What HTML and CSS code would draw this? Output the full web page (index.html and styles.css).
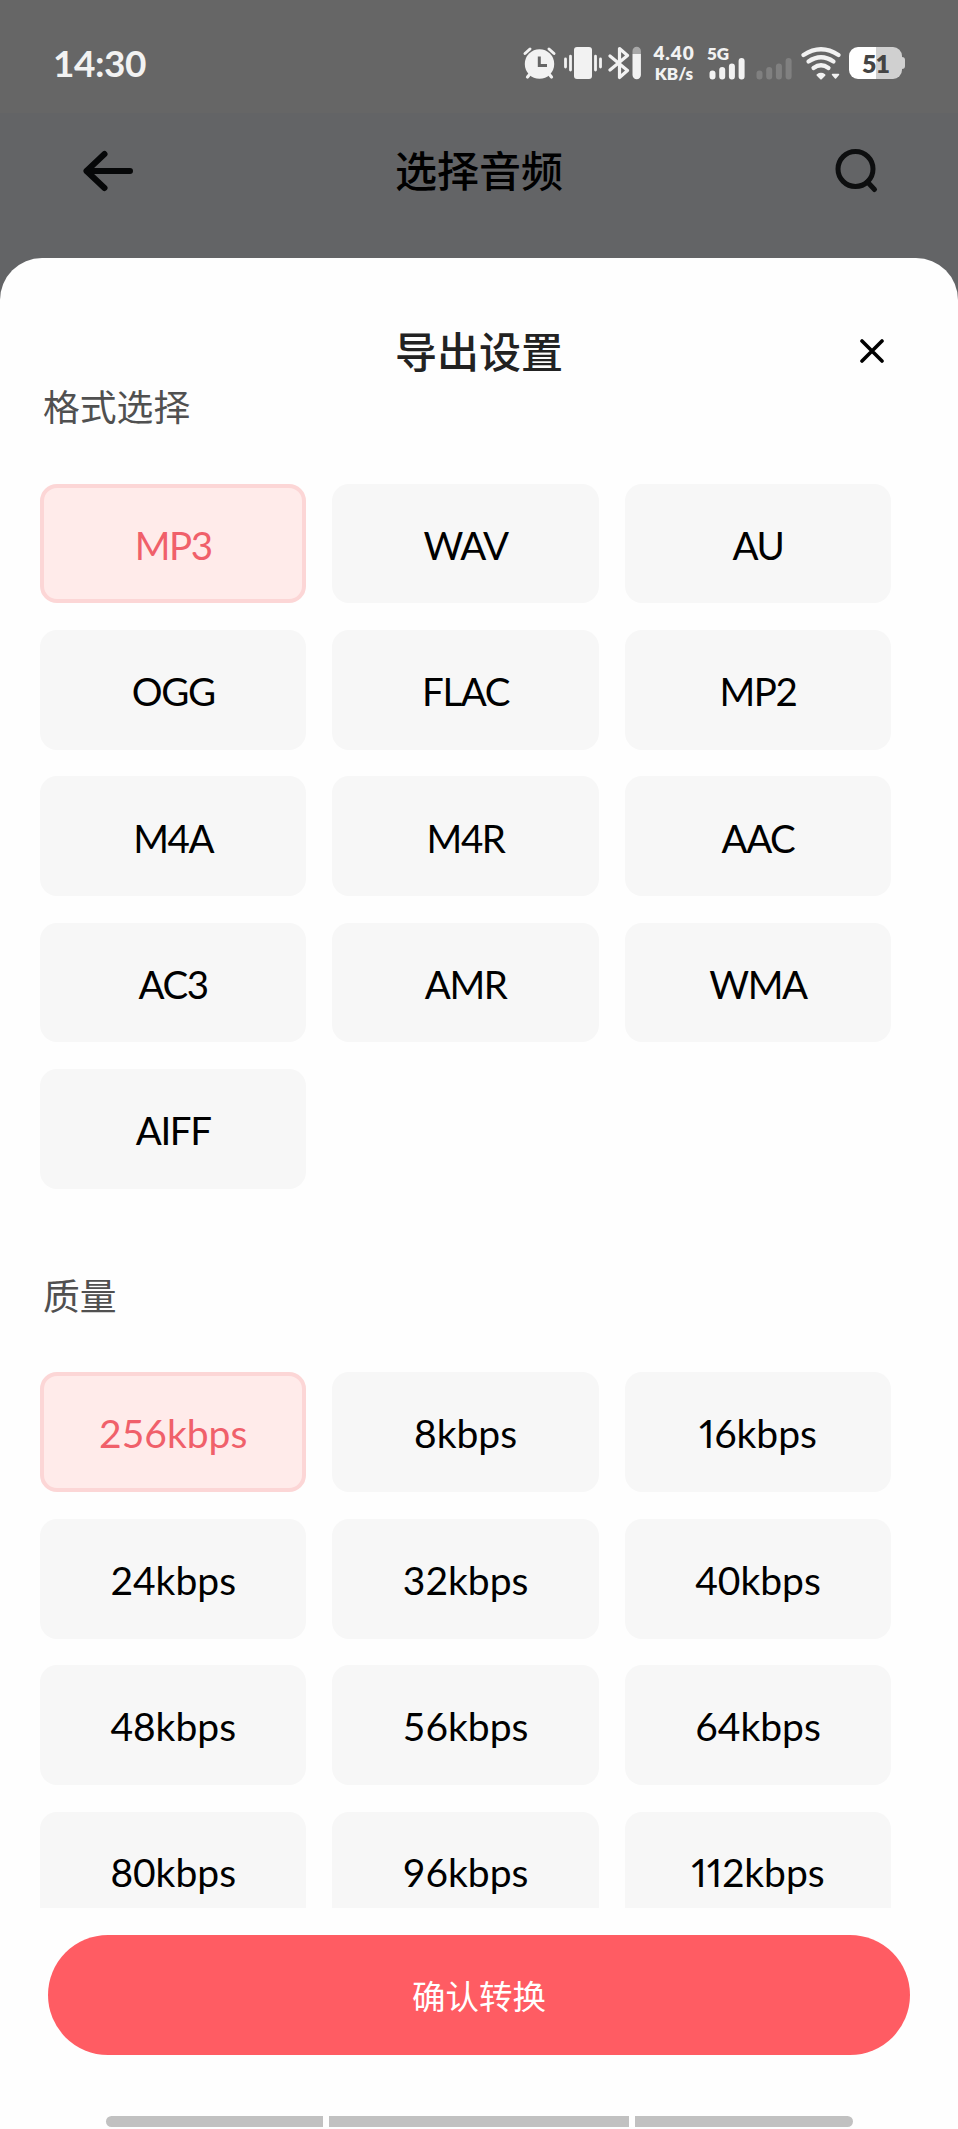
FILE: index.html
```html
<!DOCTYPE html>
<html lang="zh-CN">
<head>
    <meta charset="UTF-8">
    <meta name="viewport" content="width=device-width, initial-scale=1.0">
    <title>导出设置</title>
    <link rel="stylesheet" href="styles.css">
</head>
<body>

    <div class="status-bar">
        <span class="time">14:30</span>

        <div class="status-icons">
            <!-- alarm -->
            <svg class="icon-alarm" width="35" height="34" viewBox="0 0 35 34">
                <path d="M3 7.5L8 3M32 7.5L27 3" stroke="#f2f2f2" stroke-width="3" stroke-linecap="round"/>
                <path d="M8 28L5.5 31M27 28L29.500 31" stroke="#f2f2f2" stroke-width="3.200" stroke-linecap="round"/>
                <circle cx="17.500" cy="18" r="14.700" fill="#f2f2f2"/>
                <path d="M17.300 10.500V19.500H25" fill="none" stroke="#666" stroke-width="3"/>
            </svg>
            <!-- vibrate -->
            <svg class="icon-vibrate" width="38" height="34" viewBox="0 0 38 34">
                <rect x="10" y="1" width="18" height="32" rx="3" fill="#f2f2f2"/>
                <path d="M1.500 13V21M6.500 10.200V24M31.500 10.200V24M36.500 13V21" stroke="#f2f2f2" stroke-width="2.800" stroke-linecap="round"/>
            </svg>
            <!-- bluetooth with device battery -->
            <svg class="icon-bluetooth" width="34" height="34" viewBox="0 0 34 34">
                <path d="M2 10L19.500 24.500L11.500 31.500V2.500L19.500 9.500L2 24" fill="none" stroke="#f2f2f2" stroke-width="3.200" stroke-linejoin="round" stroke-linecap="round"/>
                <path d="M24.500 8V5a4.200 4.200 0 0 1 8.400 0V8z" fill="#a8a8a8"/>
                <path d="M24.500 8H32.900V29a4.200 4.200 0 0 1-8.400 0z" fill="#f2f2f2"/>
            </svg>
            <div class="net-speed">
                <span class="speed-value">4.40</span>
                <span class="speed-unit">KB/s</span>
            </div>
            <div class="signal">
                <span class="signal-type">5G</span>
                <svg width="38" height="23" viewBox="0 0 38 23">
                    <path d="M5.500 16.500V19.500M15.200 13V19.500M24.900 9.500V19.500M34.600 4V19.500" stroke="#f2f2f2" stroke-width="6" stroke-linecap="round"/>
                </svg>
            </div>
            <svg class="icon-signal-off" width="37" height="34" viewBox="0 0 37 34">
                <path d="M3.500 27.500V30.500M13.200 24V30.500M22.900 20.500V30.500M32.600 15V30.500" stroke="#808080" stroke-width="6" stroke-linecap="round"/>
            </svg>
            <!-- wifi -->
            <svg class="icon-wifi" width="40" height="34" viewBox="0 0 40 34">
                <path d="M2.500 9Q20 -2.500 37.500 9" fill="none" stroke="#f2f2f2" stroke-width="4.200" stroke-linecap="round"/>
                <path d="M7.500 15.500Q20 7 32.500 15.500" fill="none" stroke="#f2f2f2" stroke-width="4.200" stroke-linecap="round"/>
                <path d="M12.500 22Q20 16.500 27.500 22" fill="none" stroke="#f2f2f2" stroke-width="4.200" stroke-linecap="round"/>
                <path d="M16.500 29Q20 26.500 23.500 29L20 32.500z" fill="#f2f2f2" stroke="#f2f2f2" stroke-width="2" stroke-linejoin="round"/>
                <path d="M31.500 28.500H37.500L34.500 32z" fill="#f2f2f2" stroke="#f2f2f2" stroke-width="1.500" stroke-linejoin="round"/>
            </svg>
            <div class="battery">
                <span class="battery-level">51</span>
            </div>
        </div>
    </div>

    <div class="page-header">
        <svg class="back" width="52" height="44" viewBox="0 0 52 44">
            <path d="M4.500 22H48M22.500 5L4.500 22L22.500 39" fill="none" stroke="#060708" stroke-width="6" stroke-linecap="round" stroke-linejoin="round"/>
        </svg>
        <h1>选择音频</h1>
        <svg class="search" width="44" height="46" viewBox="0 0 44 46">
            <circle cx="20.500" cy="21" r="17.500" fill="none" stroke="#0d0e0f" stroke-width="5"/>
            <path d="M32.500 34L39.500 41.500" stroke="#0d0e0f" stroke-width="5" stroke-linecap="round"/>
        </svg>
    </div>

    <div class="sheet">
        <div class="sheet-header">
            <h2>导出设置</h2>
            <svg class="close" width="26" height="26" viewBox="0 0 26 26">
                <path d="M3 2L23 22M23 2L3 22" stroke="#000" stroke-width="3.600" stroke-linecap="round"/>
            </svg>
        </div>

        <div class="sheet-body">
            <h3>格式选择</h3>
            <div class="options formats">
                <button class="option selected">MP3</button>
                <button class="option">WAV</button>
                <button class="option">AU</button>
                <button class="option">OGG</button>
                <button class="option">FLAC</button>
                <button class="option">MP2</button>
                <button class="option">M4A</button>
                <button class="option">M4R</button>
                <button class="option">AAC</button>
                <button class="option">AC3</button>
                <button class="option">AMR</button>
                <button class="option">WMA</button>
                <button class="option">AIFF</button>
            </div>

            <h3>质量</h3>
            <div class="options bitrates">
                <button class="option selected">256kbps</button>
                <button class="option">8kbps</button>
                <button class="option narrow-digits">16kbps</button>
                <button class="option">24kbps</button>
                <button class="option">32kbps</button>
                <button class="option">40kbps</button>
                <button class="option">48kbps</button>
                <button class="option">56kbps</button>
                <button class="option">64kbps</button>
                <button class="option">80kbps</button>
                <button class="option">96kbps</button>
                <button class="option narrow-digits">112kbps</button>
            </div>
        </div>

        <button class="confirm">确认转换</button>

        <div class="nav-bar">
            <span></span>
            <span></span>
            <span></span>
        </div>
    </div>

</body>
</html>
```
FILE: styles.css
```css
* {
    box-sizing: border-box;
}

body {
    margin: 0;
    height: 2129px;
    overflow: hidden;
    display: flex;
    flex-direction: column;
    font-family: Lato, "Noto Sans CJK SC", sans-serif;
    background-color: #636466;
}

h1, h2, h3 {
    margin: 0;
}

button {
    padding: 0;
    border: none;
    font-family: inherit;
}

svg {
    display: block;
    flex: none;
}

/* status bar */
.status-bar {
    display: flex;
    justify-content: space-between;
    height: 113px;
    padding: 46px 53px 0 53px;
    background-color: #666;
}

.time {
    height: 34px;
    line-height: 33px;
    font-size: 37px;
    font-weight: 700;
    letter-spacing: -0.5px;
    color: #f2f2f2;
}

.status-icons {
    display: flex;
    height: 34px;
    color: #f2f2f2;
}

.icon-vibrate {
    margin-left: 7px;
}

.icon-bluetooth {
    margin-left: 6px;
}

.net-speed {
    display: flex;
    flex-direction: column;
    align-items: center;
    width: 44px;
    margin-top: -2px;
    margin-left: 10px;
    font-weight: 800;
}

.speed-value {
    height: 18px;
    line-height: 18px;
    font-size: 19px;
    letter-spacing: 0.9px;
}

.speed-unit {
    margin-top: 3px;
    height: 17px;
    line-height: 17px;
    font-size: 17px;
}

.signal {
    width: 38px;
    margin-left: 11px;
}

.signal-type {
    display: block;
    height: 12px;
    margin-top: -1px;
    line-height: 18px;
    font-size: 17px;
    font-weight: 800;
}

.icon-signal-off {
    margin-left: 11px;
}

.icon-wifi {
    margin-left: 8px;
}

.battery {
    display: flex;
    align-items: center;
    width: 56px;
    margin-left: 8px;
}

.battery-level {
    width: 53px;
    height: 32px;
    border-radius: 9px;
    line-height: 32px;
    text-align: center;
    font-size: 25px;
    font-weight: 800;
    letter-spacing: -1px;
    color: #444;
    background: linear-gradient(to right, #fff 51%, #d0d0d0 51%);
}

.battery::after {
    content: "";
    width: 3px;
    height: 12px;
    border-radius: 0 4px 4px 0;
    background-color: #d0d0d0;
}

/* page behind the sheet */
.page-header {
    display: grid;
    grid-template-columns: 1fr auto 1fr;
    align-items: center;
    height: 145px;
    padding: 0 79px 30px 82px;
}

.page-header h1 {
    margin-left: -3px;
    font-size: 42px;
    font-weight: 500;
    line-height: 60px;
    color: #000;
}

.search {
    justify-self: end;
}

/* bottom sheet */
.sheet {
    flex: 1;
    border-radius: 42px 42px 0 0;
    background-color: #fefefe;
    overflow: hidden;
}

.sheet-header {
    display: grid;
    grid-template-columns: 1fr auto 1fr;
    align-items: center;
    height: 121px;
    padding: 66px 73px 0 73px;
}

.sheet-header h2 {
    grid-column: 2;
    font-size: 42px;
    font-weight: 500;
    line-height: 56px;
    color: #222;
}

.close {
    justify-self: end;
}

.sheet-body {
    height: 1528.500px;
    padding: 0 40px;
    overflow: hidden;
}

.sheet-body h3 {
    padding-left: 3px;
    font-size: 36.800px;
    font-weight: 400;
    line-height: 56px;
    color: #505050;
}

.options {
    display: grid;
    grid-template-columns: repeat(3, 266.400px);
    grid-auto-rows: 119.700px;
    gap: 26.700px 26px;
    margin-top: 48.500px;
}

.formats {
    margin-bottom: 79.300px;
}

.option {
    padding-top: 2px;
    border-radius: 17px;
    font-size: 39px;
    color: #000;
    background-color: #f7f7f7;
}

.formats .option {
    padding-top: 3px;
    font-size: 38.500px;
    letter-spacing: -1.4px;
}

.narrow-digits {
    font-variant-numeric: proportional-nums;
}

.option.selected {
    border: 4px solid #fcd6d6;
    color: #f0606a;
    background-color: #ffebea;
}

.confirm {
    display: block;
    width: 862px;
    height: 120px;
    margin: 27px auto 0 auto;
    border-radius: 60px;
    font-size: 33.500px;
    color: #fff;
    background-color: #ff5c63;
}

.nav-bar {
    display: flex;
    justify-content: center;
    gap: 6px;
    margin-top: 61px;
}

.nav-bar span {
    width: 217.500px;
    height: 11px;
    background-color: #c1c1c1;
}

.nav-bar span:first-child {
    border-radius: 6px 0 0 6px;
}

.nav-bar span:nth-child(2) {
    width: 300px;
}

.nav-bar span:last-child {
    border-radius: 0 6px 6px 0;
}
```
